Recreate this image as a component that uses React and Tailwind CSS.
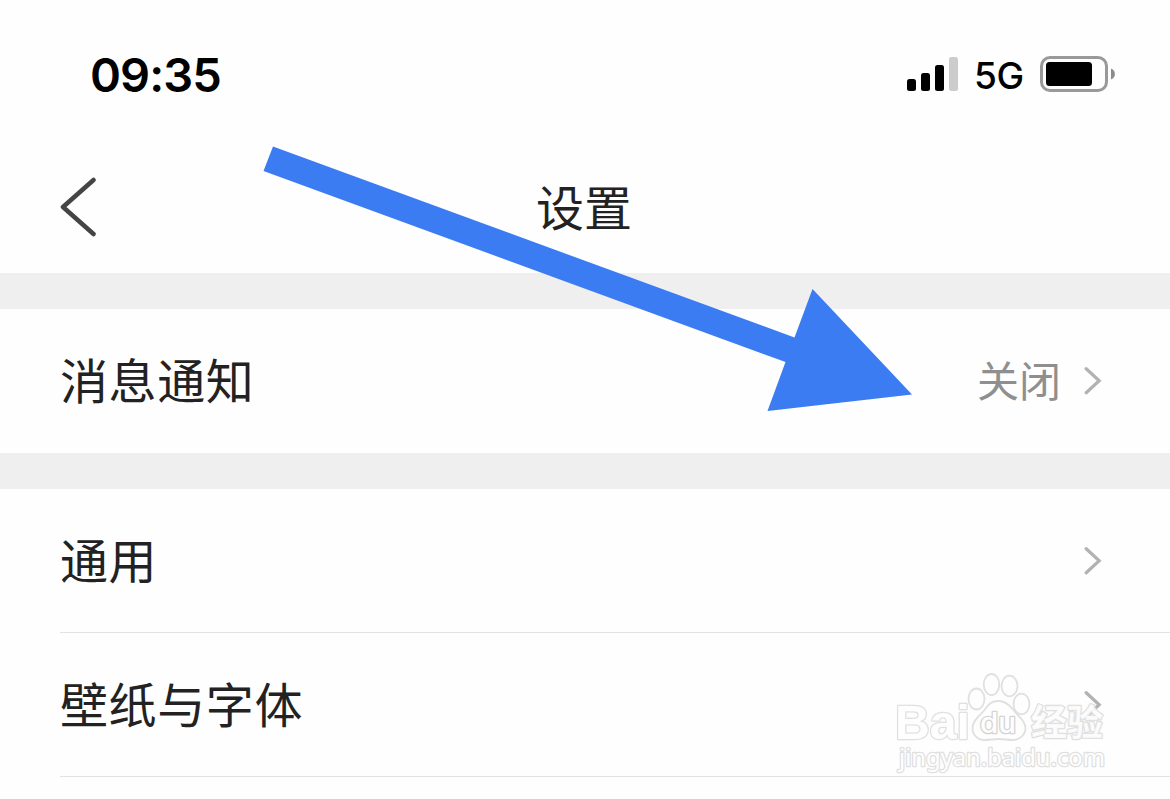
const rows = [
  { label: "通用" },
  { label: "壁纸与字体" },
];

function Chevron() {
  return (
    <svg width="18" height="28" viewBox="0 0 18 28" fill="none" className="shrink-0">
      <path d="M2.2 1.7 15.2 13.700 2.2 25.700" stroke="#b2b2b2" strokeWidth="3.2" strokeLinecap="round" />
    </svg>
  );
}

function StatusBar() {
  return (
    <div className="flex h-[141px] items-start justify-between pl-[90px] pr-[54px] text-black">
      <span className="mt-[47px] font-['Inter',sans-serif] text-[47px] font-semibold leading-[56px] tracking-[-0.9px]">09:35</span>
      <div className="mt-[56px] flex h-9 items-center">
        <svg width="52" height="36" viewBox="0 0 52 36">
          <rect x="0" y="23" width="9" height="12" rx="2.5" />
          <rect x="14" y="17" width="9" height="18" rx="2.5" />
          <rect x="28" y="9" width="9" height="26" rx="2.5" />
          <rect x="42" y="1" width="9" height="34" rx="2.5" fill="#cccccc" />
        </svg>
        <span className="ml-[15px] w-[66px] pt-1 font-['Inter',sans-serif] text-[37px] font-medium leading-9 tracking-[-0.4px]">5G</span>
        <svg width="76" height="36" viewBox="0 0 76 36">
          <rect x="1.5" y="1.5" width="65" height="33" rx="8.5" fill="none" stroke="#999999" strokeWidth="3" />
          <rect x="6" y="6" width="46" height="24" rx="3.5" />
          <path d="M71 12.5c5.2 2 5.2 9 0 11z" fill="#8c8c8c" />
        </svg>
      </div>
    </div>
  );
}

function NavBar({ title }) {
  return (
    <div className="grid h-[132px] grid-cols-3 items-center">
      <svg width="38" height="60" viewBox="0 0 38 60" fill="none" className="ml-[60px]">
        <path d="M33.500 3 3 30 33.500 57" stroke="#444444" strokeWidth="4.5" strokeLinecap="round" strokeLinejoin="round" />
      </svg>
      <h1 className="pb-1 pr-0.5 text-center text-[48px] leading-none">{title}</h1>
    </div>
  );
}

function Row({ label, value, divider }) {
  return (
    <div className={divider ? "ml-[60px] border-b border-[#e2e2e2]" : "ml-[60px]"}>
      <div className={`flex items-center justify-between pr-[68px] ${divider ? "h-[143px]" : "h-36"}`}>
        <span className={`text-[48px] leading-none tracking-[0.6px] ${divider ? "pb-[5px]" : "pb-[7px]"}`}>{label}</span>
        <div className="flex items-center gap-[23px]">
          {value && <span className="pb-[5px] text-[42px] leading-none text-[#8f8f8f]">{value}</span>}
          <Chevron />
        </div>
      </div>
    </div>
  );
}

function Arrow() {
  return (
    <svg width="1170" height="799" viewBox="0 0 1170 799" className="pointer-events-none absolute left-0 top-0">
      <path d="M273 146.5 794.5 337.5 812.5 289 912 394.5 767.5 411 785.5 362 263.5 171z" fill="#3b7cf2" />
    </svg>
  );
}

function Watermark() {
  return (
    <svg
      width="240"
      height="110"
      viewBox="0 0 240 110"
      className="pointer-events-none absolute left-[880px] top-[670px]"
      fill="#fefefe"
      stroke="#e0e0e0"
      strokeWidth="1.8"
      strokeLinejoin="round"
    >
      <g fillOpacity="0.8">
        <ellipse cx="96.500" cy="29" rx="8" ry="10.500" />
        <ellipse cx="111.500" cy="14.500" rx="7.800" ry="10.500" />
        <ellipse cx="129.500" cy="16" rx="8" ry="10.300" />
        <ellipse cx="141.500" cy="34" rx="8" ry="10.300" />
        <path d="M118.500 31c-7 0-10 3-14 9-4 5-12 10-12 18 0 7 5 12 12 12 5 0 9-1 14-1s9 1 14 1c7 0 13-5 13-12 0-8-8-12-12-18-4-5-8-9-15-9z" />
      </g>
      <g style={{ paintOrder: "stroke" }} strokeWidth="2.6">
        <text x="15" y="69" fontFamily="'Liberation Sans', sans-serif" fontSize="48" fontWeight="700" textLength="75" lengthAdjust="spacingAndGlyphs">
          Bai
        </text>
        <text x="100" y="63" fontFamily="Inter, sans-serif" fontSize="28" fontWeight="500" textLength="36" lengthAdjust="spacingAndGlyphs" stroke="#d4d4d4">
          du
        </text>
        <text x="151" y="66" fontFamily="'Noto Sans CJK SC', sans-serif" fontSize="36" fontWeight="700" fillOpacity="0.9">
          经验
        </text>
        <text x="19" y="96" fontFamily="'Noto Sans', sans-serif" fontSize="24" fontWeight="400" textLength="206" lengthAdjust="spacingAndGlyphs">
          jingyan.baidu.com
        </text>
      </g>
    </svg>
  );
}

export default function App() {
  return (
    <div className="relative h-[799px] w-[1170px] overflow-hidden bg-[#fefefe] font-['Noto_Sans_CJK_SC',sans-serif] text-[#222222]">
      <StatusBar />
      <NavBar title="设置" />
      <div className="h-9 bg-[#efefef]" />
      <Row label="消息通知" value="关闭" />
      <div className="h-9 bg-[#efefef]" />
      {rows.map((r) => (
        <Row key={r.label} label={r.label} divider />
      ))}
      <Arrow />
      <Watermark />
    </div>
  );
}
